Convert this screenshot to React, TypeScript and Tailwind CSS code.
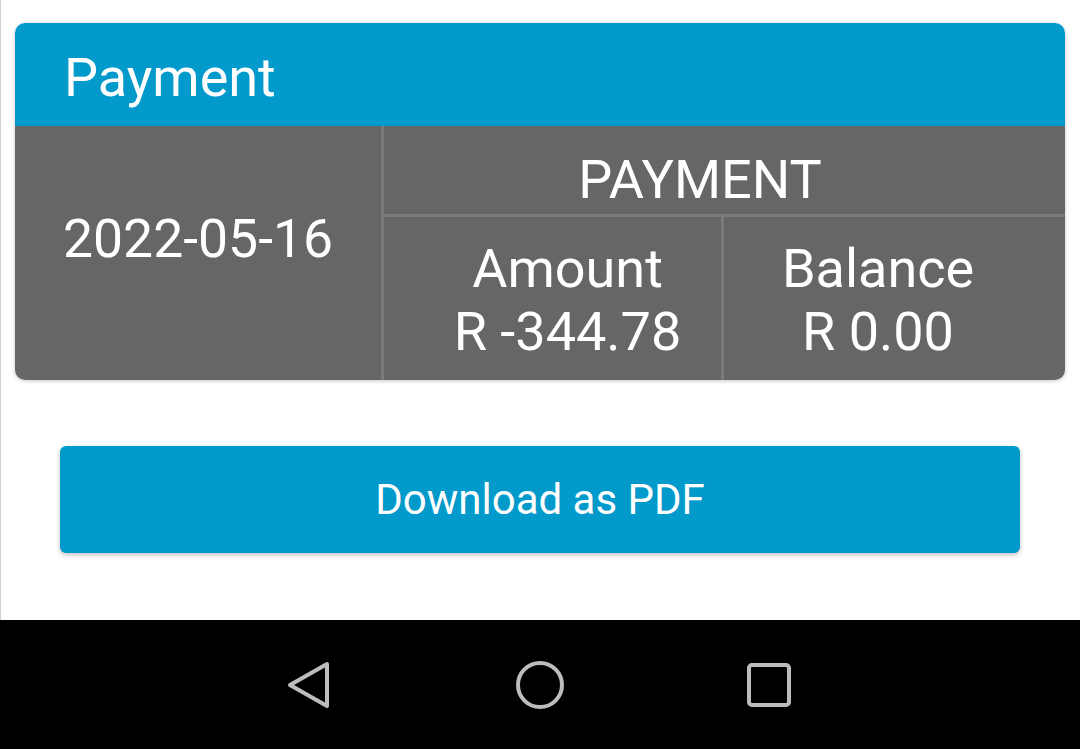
import React from "react";

export default function App() {
  return (
    <div className="w-[1080px] h-[749px] flex flex-col bg-white font-['Roboto',sans-serif] text-white overflow-hidden">
      <div className="h-[620px] border-l border-[#d2d2d2] pt-[23px] pl-[14px] pr-[15px] flex flex-col">
        <div className="w-[1050px] rounded-[10px] overflow-hidden shadow-[0_1px_4px_rgba(0,0,0,0.22)]">
          <div className="h-[103px] bg-[#0299cb] pl-[49px] pt-[23px] text-[54px] leading-[normal]">
            Payment
          </div>
          <div className="h-[254px] bg-[#666666] flex">
            <div className="w-[366px] flex justify-center pt-[81px] text-[53.5px] leading-[normal]">
              2022-05-16
            </div>
            <div className="w-[3px] bg-[#7b7b7b]" />
            <div className="flex-1 flex flex-col">
              <div className="h-[88px] flex justify-center pt-[22px] pr-[49px] text-[54px] leading-[normal]">
                PAYMENT
              </div>
              <div className="h-[3px] bg-[#7b7b7b]" />
              <div className="flex-1 flex">
                <div className="w-[337px] flex flex-col items-center pt-[20px] pl-[30px] text-[54px] leading-[63px]">
                  <span>Amount</span>
                  <span>R -344.78</span>
                </div>
                <div className="w-[3px] bg-[#7b7b7b]" />
                <div className="flex-1 flex flex-col items-center pt-[20px] pr-[33px] text-[54px] leading-[63px]">
                  <span>Balance</span>
                  <span>R 0.00</span>
                </div>
              </div>
            </div>
          </div>
        </div>
        <div className="mt-[66px] ml-[45px] w-[960px] h-[107px] rounded-[6px] bg-[#0299cb] shadow-[0_2px_5px_rgba(0,0,0,0.25)] flex items-center justify-center text-[42px] leading-none">
          Download as PDF
        </div>
      </div>
      <div className="h-[129px] bg-black flex items-center justify-center gap-[182px]">
        <svg width="48" height="48" viewBox="0 0 48 48" fill="none" stroke="#bdbdbd" strokeWidth="4" strokeLinejoin="round">
          <path d="M41 3 L4 24 L41 45 Z" />
        </svg>
        <svg width="48" height="48" viewBox="0 0 48 48" fill="none" stroke="#bdbdbd" strokeWidth="4">
          <circle cx="24" cy="24" r="22" />
        </svg>
        <svg width="48" height="48" viewBox="0 0 48 48" fill="none" stroke="#bdbdbd" strokeWidth="4">
          <rect x="3" y="4" width="40" height="40" rx="3" />
        </svg>
      </div>
    </div>
  );
}
